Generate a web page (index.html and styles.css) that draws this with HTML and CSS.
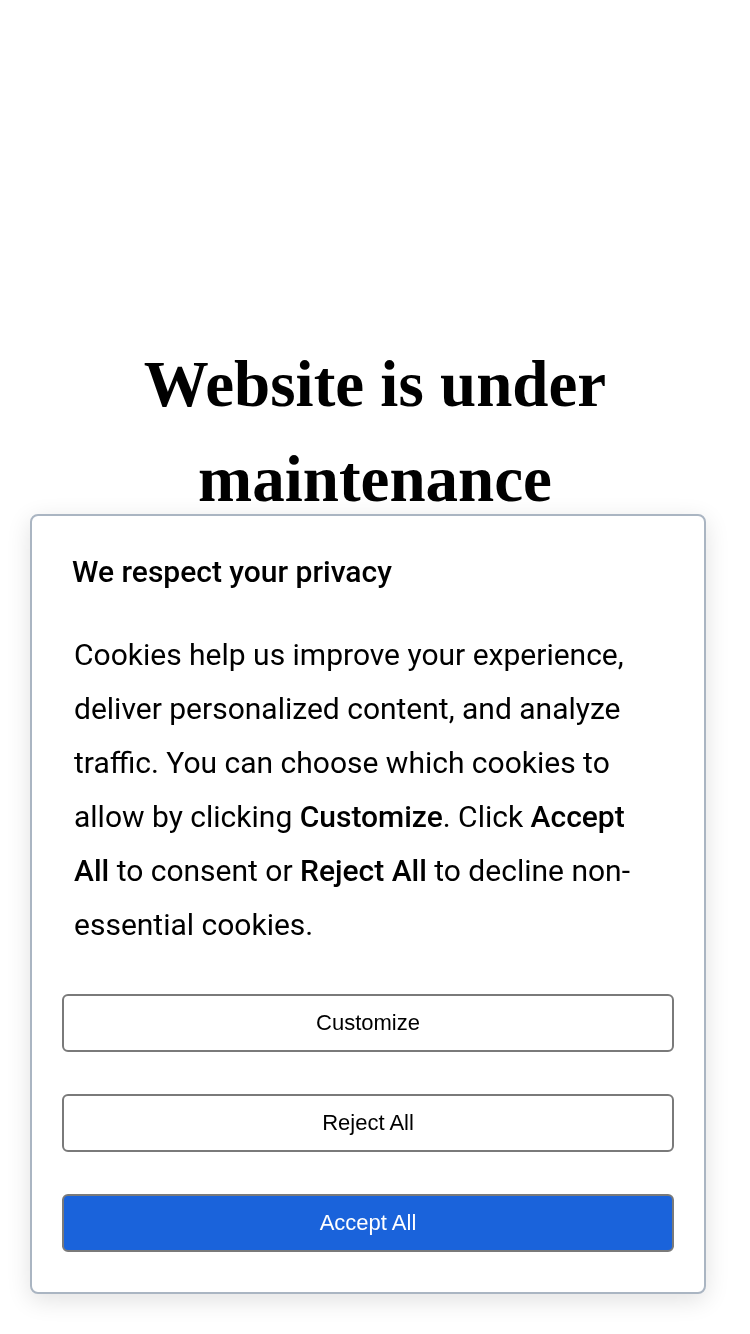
FILE: index.html
```html
<!DOCTYPE html>
<html lang="en">
<head>
    <meta charset="UTF-8">
    <meta name="viewport" content="width=device-width, initial-scale=1.0">
    <title>Website is under maintenance</title>
    <link rel="stylesheet" href="styles.css">
</head>
<body>
    <main class="page">
        <h1 class="page-title">Website is under maintenance</h1>
    </main>

    <!-- Bandeau cookies -->
    <div class="cookie-banner">
        <h2 class="cookie-title">We respect your privacy</h2>
        <p class="cookie-text">
            Cookies help us improve your experience, deliver personalized content, and analyze traffic. You can choose which cookies to allow by clicking <strong>Customize</strong>. Click <strong>Accept All</strong> to consent or <strong>Reject All</strong> to decline non-essential cookies.
        </p>
        <div class="cookie-actions">
            <button class="cookie-btn">Customize</button>
            <button class="cookie-btn">Reject All</button>
            <button class="cookie-btn cookie-btn-primary">Accept All</button>
        </div>
    </div>
</body>
</html>
```

FILE: styles.css
```css
body {
    margin: 0;
    background: #fff;
    color: #000;
    font-family: Roboto, "Liberation Sans", Arial, sans-serif;
}
.page {
    padding: 337px 40px 0;
    text-align: center;
}
.page-title {
    margin: 0;
    font-family: "Liberation Serif", "Times New Roman", serif;
    font-weight: bold;
    font-size: 65px;
    line-height: 95px;
}
.cookie-banner {
    position: fixed;
    left: 30px;
    bottom: 40px;
    width: 676px;
    box-sizing: border-box;
    padding: 30px 30px 40px;
    background: #fff;
    border: 2px solid #aab5c2;
    border-radius: 8px;
    box-shadow: 0 6px 24px rgba(0, 0, 0, 0.12);
}
.cookie-title {
    margin: 0;
    padding: 0 10px;
    font-size: 30px;
    font-weight: 500;
    line-height: 52px;
}
.cookie-text {
    margin: 30px 0 0;
    padding: 0 12px;
    font-size: 30px;
    line-height: 54px;
}
.cookie-text strong {
    font-weight: 500;
}
.cookie-actions {
    display: flex;
    flex-direction: column;
    gap: 42px;
    margin-top: 42px;
}
.cookie-btn {
    height: 58px;
    background: #fff;
    color: #000;
    border: 2px solid #7a7a7a;
    border-radius: 6px;
    font-family: "Liberation Sans", Arial, sans-serif;
    font-size: 22px;
    cursor: pointer;
}
.cookie-btn-primary {
    background: #1a63db;
    color: #fff;
}
```
